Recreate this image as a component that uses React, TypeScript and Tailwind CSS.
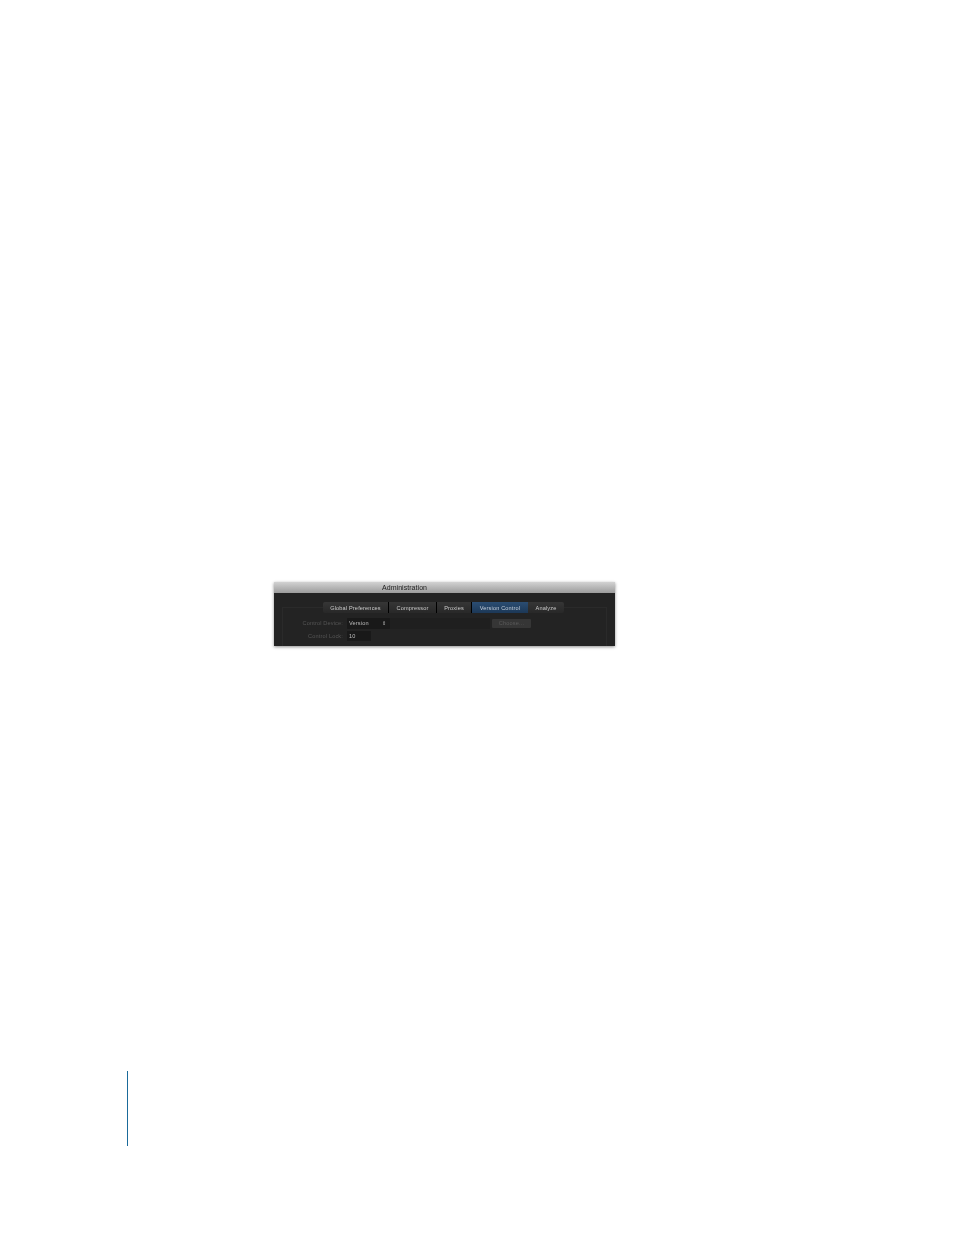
import React from "react";

const tabs = [
  { label: "Global Preferences", width: "w-[66px]" },
  { label: "Compressor", width: "w-[48px]" },
  { label: "Proxies", width: "w-[35px]" },
];

export default function App() {
  return (
    <div className="h-[1235px] w-[954px] overflow-hidden bg-white pt-[582px] font-['Liberation_Sans',sans-serif]">
      <div className="ml-[274px] flex h-[64px] w-[341px] flex-col overflow-hidden shadow-[0_1px_3px_rgba(0,0,0,0.45)] blur-[0.5px]">
        <div className="flex h-[11px] shrink-0 items-center bg-gradient-to-b from-[#d2d2d2] to-[#9c9c9c] pl-[108px] pt-[1px] text-[7px] tracking-[0.05px] text-[#1c1c1c]">
          Administration
        </div>
        <div className="flex flex-1 flex-col bg-[#232323] px-[8px] pt-[9px]">
          <div className="relative z-10 flex pl-[41px]">
            <div className="flex h-[11px] overflow-hidden rounded-[2px] text-[5.6px] tracking-[0.15px] text-[#cccccc]">
              {tabs.map((t) => (
                <div key={t.label} className={`${t.width} flex items-center justify-center border-r border-black bg-gradient-to-b from-[#363636] to-[#282828] pt-[1px]`}>
                  {t.label}
                </div>
              ))}
              <div className="flex w-[56px] items-center justify-center bg-gradient-to-b from-[#2b4d72] to-[#1c3857] pt-[1px] text-[#c5d0de]">
                Version Control
              </div>
              <div className="flex w-[36px] items-center justify-center bg-gradient-to-b from-[#363636] to-[#282828] pt-[1px]">
                Analyze
              </div>
            </div>
          </div>
          <div className="-mt-[6px] flex-1 border-x border-t border-[#2a2a2a] pl-[11px] pt-[10px] text-[5.6px] tracking-[0.15px]">
            <div className="flex h-[11px] items-center">
              <span className="w-[49px] text-right text-[#555555]">Control Device:</span>
              <div className="ml-[4px] flex h-[11px] w-[43px] items-center justify-between rounded-[1px] bg-[#191919] px-[2px] text-[#bcbcbc]">
                <span>Version</span>
                <span className="pr-[2px] text-[5px]">⇕</span>
              </div>
              <div className="h-[11px] w-[100px] bg-[#1f1f1f]" />
              <div className="ml-[2px] flex h-[9px] w-[39px] items-center justify-center rounded-[1px] bg-[#363636] text-[#5a5a5a]">
                Choose...
              </div>
            </div>
            <div className="mt-[2px] flex h-[10px] items-center">
              <span className="w-[49px] text-right text-[#555555]">Control Lock:</span>
              <div className="ml-[4px] flex h-[10px] w-[24px] items-center bg-[#191919] px-[2px] text-[#bcbcbc]">10</div>
            </div>
          </div>
        </div>
      </div>
      <div className="ml-[127px] mt-[425px] h-[75px] w-[1px] bg-[#1a6a9a]" />
    </div>
  );
}
